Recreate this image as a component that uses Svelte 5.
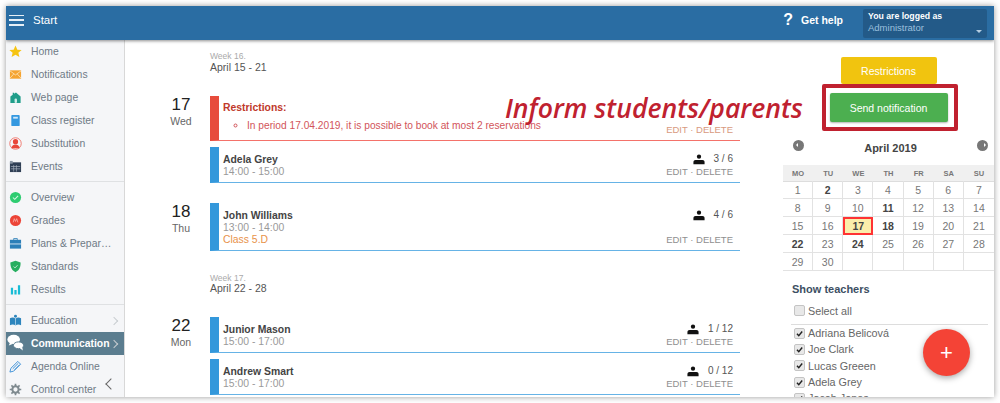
<script>
  const menuGroups = [
    [
      { icon: 'star', label: 'Home' },
      { icon: 'mail', label: 'Notifications' },
      { icon: 'house', label: 'Web page' },
      { icon: 'book', label: 'Class register' },
      { icon: 'sub', label: 'Substitution' },
      { icon: 'events', label: 'Events' }
    ],
    [
      { icon: 'check', label: 'Overview' },
      { icon: 'grades', label: 'Grades' },
      { icon: 'case', label: 'Plans & Prepar…' },
      { icon: 'shield', label: 'Standards' },
      { icon: 'bars', label: 'Results' }
    ],
    [
      { icon: 'open', label: 'Education', arrow: true },
      { icon: 'chat', label: 'Communication', arrow: true, active: true },
      { icon: 'pen', label: 'Agenda Online' },
      { icon: 'gear', label: 'Control center' }
    ]
  ]

  const weeks = [
    {
      title: 'Week 16.',
      range: 'April 15 - 21',
      days: [
        {
          num: 17,
          name: 'Wed',
          events: [
            { restriction: true },
            { teacher: 'Adela Grey', time: '14:00 - 15:00', count: '3 / 6' }
          ]
        },
        {
          num: 18,
          name: 'Thu',
          events: [
            { teacher: 'John Williams', time: '13:00 - 14:00', cls: 'Class 5.D', count: '4 / 6' }
          ]
        }
      ]
    },
    {
      title: 'Week 17.',
      range: 'April 22 - 28',
      days: [
        {
          num: 22,
          name: 'Mon',
          events: [
            { teacher: 'Junior Mason', time: '15:00 - 17:00', count: '1 / 12' },
            { teacher: 'Andrew Smart', time: '15:00 - 17:00', count: '0 / 12' }
          ]
        }
      ]
    }
  ]

  const dayNames = ['MO', 'TU', 'WE', 'TH', 'FR', 'SA', 'SU']
  const bold = [2, 11, 17, 18, 22, 24]
  const dates = [...Array(35)].map((_, i) => (i < 30 ? i + 1 : ''))
  const teachers = ['Adriana Belicová', 'Joe Clark', 'Lucas Greeen', 'Adela Grey', 'Jacob Jones']
</script>

{#snippet icon(name)}
  <svg class='ico' class:big={name === 'chat'} viewBox='0 0 14 14' aria-hidden='true'>
    {#if name === 'star'}
      <polygon points='7,0.5 9,5 13.6,5.4 10.1,8.4 11.2,13 7,10.6 2.8,13 3.9,8.4 0.4,5.4 5,5' fill='#f6c412' />
    {:else if name === 'mail'}
      <rect x='1' y='2.5' width='12' height='9' fill='#f5a432' />
      <path d='M1 3l6 4.5L13 3M1 11l4-4.5M13 11L9 6.5' fill='none' stroke='#fde3b8' stroke-width='.9' />
    {:else if name === 'house'}
      <path d='M1.5 13V6L4 4V2h1.5v1L7.5 1.5 12.5 6v7z' fill='#1f9d8a' />
      <rect x='6' y='8' width='2.6' height='5' rx='1.2' fill='#cdeee8' />
    {:else if name === 'book'}
      <rect x='2.5' y='1' width='9' height='12' rx='1' fill='#3498e0' />
      <rect x='4.5' y='3' width='5' height='2' fill='#cfe7f9' />
    {:else if name === 'sub'}
      <circle cx='7' cy='7' r='6.2' fill='none' stroke='#f0766c' stroke-width='1' />
      <circle cx='7' cy='5' r='2.8' fill='#e8463a' />
      <path d='M2.5 12c.5-3 2.5-4 4.5-4s4 1 4.500 4z' fill='#e8463a' />
    {:else if name === 'events'}
      <rect x='1' y='2.500' width='12' height='10.500' fill='#2f3f55' />
      <rect x='1' y='1' width='3' height='3' fill='#8995a3' />
      <path d='M2 7h10M2 9.500h10M5 5.500v7M8 5.500v7' stroke='#aab4bf' stroke-width='.7' />
    {:else if name === 'check'}
      <circle cx='7' cy='7' r='6' fill='#2ecc71' />
      <path d='M4.200 7l2 2 3.600-3.800' fill='none' stroke='#d9f7e5' stroke-width='1.100' />
    {:else if name === 'grades'}
      <circle cx='7' cy='7' r='6' fill='#ec4437' />
      <path d='M4.500 9l1.200-4 1.300 3 1.300-3 1.200 4' fill='none' stroke='#f9b7b1' stroke-width='.8' />
    {:else if name === 'case'}
      <path d='M5 3V1.800h4V3' fill='none' stroke='#2c7fb8' stroke-width='1' />
      <rect x='1' y='3' width='12' height='9.500' fill='#2c7fb8' />
      <rect x='1' y='7' width='12' height='1' fill='#d5e8f5' />
    {:else if name === 'shield'}
      <path d='M7 .8l5.500 2c0 5-1.200 8.300-5.500 10.400C2.700 11.100 1.500 7.800 1.500 2.800z' fill='#27ae60' />
      <path d='M5 7l1.500 1.500L9.200 5.600' fill='none' stroke='#d6f3e2' stroke-width='.9' />
    {:else if name === 'bars'}
      <path d='M2 5h2.400v7.500H2zM5.800 7.500h2.400v5H5.800zM9.600 2.500H12v10H9.600z' fill='#17bcd6' />
    {:else if name === 'open'}
      <path d='M1 4.500C3 3.500 5.500 3.500 7 5c1.500-1.500 4-1.500 6-.5V12c-2-1-4.500-1-6 .5C5.500 11 3 11 1 12z' fill='#2d85bd' />
      <circle cx='7' cy='2.500' r='1.600' fill='#2d85bd' />
      <path d='M7 5v7.500' stroke='#d5e8f5' stroke-width='.7' />
    {:else if name === 'chat'}
      <ellipse cx='5.500' cy='4.500' rx='5.200' ry='3.800' fill='#fff' />
      <path d='M2.500 7l-1 2.500L5 8z' fill='#fff' />
      <ellipse cx='9.500' cy='9.300' rx='4.200' ry='2.800' fill='#fff' stroke='#5b7d8f' stroke-width='.8' />
      <path d='M10.500 11.500l2.500 2-.5-3z' fill='#fff' />
    {:else if name === 'pen'}
      <path d='M1 13l1-4L9.500 1.500l3 3L5 12zM4 9.500L10 3.500M6 10.500L11.500 5' fill='none' stroke='#3b8fd6' stroke-width='1' />
    {:else if name === 'gear'}
      <circle cx='7' cy='7' r='3.400' fill='none' stroke='#7f8a8f' stroke-width='2.200' />
      <path d='M7 .8v2.400M7 10.800v2.400M.8 7h2.400M10.800 7h2.400M2.600 2.600l1.700 1.700M9.700 9.700l1.700 1.700M11.400 2.600L9.700 4.300M4.300 9.700l-1.700 1.700' stroke='#7f8a8f' stroke-width='1.800' />
    {/if}
  </svg>
{/snippet}

{#snippet person()}
  <svg class='person' viewBox='0 0 14 12' aria-hidden='true'>
    <circle cx='7' cy='2.700' r='2.500' fill='#111' />
    <path d='M3 6.500h8c1.500 0 2.500 1 2.500 2.500v2.500H.5V9C.5 7.500 1.500 6.500 3 6.500z' fill='#111' />
  </svg>
{/snippet}

<div class='frame'>
  <header class='topbar'>
    <button class='burger' aria-label='Menu'><i></i><i></i><i></i></button>
    <span class='page-title'>Start</span>
    <span class='help'><b class='qm'>?</b><b>Get help</b></span>
    <div class='user'>
      <div class='user-top'>You are logged as</div>
      <div class='user-role'>Administrator</div>
      <span class='caret'></span>
    </div>
  </header>

  <div class='body'>
    <nav class='side'>
      {#each menuGroups as group, g}
        <ul class='group' class:last={g === 2}>
          {#each group as item}
            <li class='item' class:active={item.active}>
              <span class='ico-box'>{@render icon(item.icon)}</span>
              <span class='label'>{item.label}</span>
              {#if item.arrow}<span class='chev'></span>{/if}
            </li>
          {/each}
        </ul>
      {/each}
      <span class='collapse'></span>
    </nav>

    <main class='main'>
      {#each weeks as week}
        <section class='week'>
          <div class='week-no'>{week.title}</div>
          <div class='week-range'>{week.range}</div>
          {#each week.days as day}
            <div class='day'>
              <div class='date'>
                <div class='num'>{day.num}</div>
                <div class='dname'>{day.name}</div>
              </div>
              <div class='events'>
                {#each day.events as ev}
                  {#if ev.restriction}
                    <div class='card red'>
                      <div class='info'>
                        <div class='r-title'>Restrictions:</div>
                        <ul class='r-list'>
                          <li>In period 17.04.2019, it is possible to book at most 2 reservations</li>
                        </ul>
                      </div>
                      <div class='actions end'>
                        <div class='links'>EDIT · DELETE</div>
                      </div>
                    </div>
                  {:else}
                    <div class='card'>
                      <div class='info'>
                        <div class='teacher'>{ev.teacher}</div>
                        <div class='time'>{ev.time}</div>
                        {#if ev.cls}<div class='cls'>{ev.cls}</div>{/if}
                      </div>
                      <div class='actions'>
                        <div class='count'>{@render person()}<span>{ev.count}</span></div>
                        <div class='links'>EDIT · DELETE</div>
                      </div>
                    </div>
                  {/if}
                {/each}
              </div>
            </div>
          {/each}
        </section>
      {/each}
    </main>

    <aside class='panel'>
      <div class='buttons'>
        <button class='btn yellow'>Restrictions</button>
        <button class='btn green'>Send notification</button>
      </div>

      <div class='cal-head'>
        <span class='round left'></span>
        <span class='month'>April 2019</span>
        <span class='round right'></span>
      </div>
      <div class='cal'>
        {#each dayNames as d}
          <div class='dow'>{d}</div>
        {/each}
        {#each dates as d}
          <div class='cell' class:strong={bold.includes(d)} class:today={d === 17}>{d}</div>
        {/each}
      </div>

      <div class='teachers'>
        <h4>Show teachers</h4>
        <div class='check all'><span class='box'></span>Select all</div>
        <div class='list'>
          {#each teachers as t}
            <div class='check'>
              <span class='box'>
                <svg viewBox='0 0 10 10' aria-hidden='true'><path d='M2.200 5.200l2 2.200 3.800-4.600' fill='none' stroke='#222' stroke-width='1.600' /></svg>
              </span>{t}
            </div>
          {/each}
        </div>
      </div>
    </aside>
  </div>

  <div class='note'>Inform students/parents</div>
  <div class='note-box'></div>
  <button class='fab' aria-label='Add'>+</button>
</div>

<style>
  :global(body) {
    margin: 0;
    background: #fff;
  }
  .frame {
    position: relative;
    margin: 6px;
    width: 988px;
    height: 391px;
    overflow: hidden;
    background: #fff;
    box-shadow: 0 0 6px rgba(0, 0, 0, .4);
    font-family: 'Liberation Sans', Arial, sans-serif;
    color: #444;
  }
  .topbar {
    display: flex;
    align-items: center;
    height: 34px;
    background: #2a6da3;
    color: #fff;
    box-shadow: 0 1px 3px rgba(0, 0, 0, .45);
    position: relative;
    z-index: 2;
  }
  .burger {
    display: flex;
    flex-direction: column;
    justify-content: space-between;
    width: 15px;
    height: 11px;
    margin: 0 0 6px 3px;
    padding: 0;
    border: 0;
    background: none;
  }
  .burger i {
    height: 1.500px;
    background: #e6eff6;
  }
  .page-title {
    margin: 0 0 6px 9px;
    font-size: 11.500px;
  }
  .help {
    display: flex;
    align-items: center;
    gap: 8px;
    margin: 0 20px 6px auto;
    font-size: 10.500px;
  }
  .qm {
    font-size: 16px;
  }
  .user {
    position: relative;
    width: 124px;
    height: 29px;
    margin-right: 7px;
    padding: 1px 5px;
    box-sizing: border-box;
    background: #235a88;
    border-radius: 2px;
  }
  .user-top {
    font-size: 8.700px;
    font-weight: 700;
    line-height: 12px;
  }
  .user-role {
    font-size: 9.500px;
    line-height: 12px;
    color: #9cc0de;
  }
  .caret {
    position: absolute;
    right: 5px;
    bottom: 5px;
    border: 3.500px solid transparent;
    border-top-color: #b5cde1;
    border-bottom: 0;
  }
  .body {
    display: flex;
    height: 357px;
  }
  .side {
    position: relative;
    flex: 0 0 119px;
    background: #f5f6f8;
    border-right: 1px solid #d8d8d8;
    box-sizing: border-box;
    font-size: 10.400px;
    color: #6f7a86;
  }
  .group {
    list-style: none;
    margin: 0 0 4px;
    padding: 0 0 3px;
    border-bottom: 1px solid #dfe1e3;
  }
  .group.last {
    border: 0;
  }
  .item {
    display: flex;
    align-items: center;
    height: 23px;
    white-space: nowrap;
  }
  .item.active {
    background: #5b7d8f;
    color: #fff;
    font-weight: 700;
  }
  .ico-box {
    flex: 0 0 25px;
    display: flex;
    justify-content: center;
    padding-right: 7px;
    box-sizing: border-box;
  }
  .ico {
    flex: none;
    width: 13px;
    height: 13px;
  }
  .ico.big {
    width: 17px;
    height: 17px;
    margin-top: -3px;
  }
  .chev {
    position: absolute;
    right: 7px;
    width: 5px;
    height: 5px;
    border: solid #c9cdd1;
    border-width: 1px 1px 0 0;
    transform: rotate(45deg);
  }
  .collapse {
    position: absolute;
    right: 9px;
    bottom: 9px;
    width: 7px;
    height: 7px;
    border: solid #666;
    border-width: 0 0 1.500px 1.500px;
    transform: rotate(45deg);
  }
  .main {
    flex: 1;
    padding: 10px 43px 0 36px;
    min-width: 0;
  }
  .week {
    margin-bottom: 21px;
  }
  .week-no {
    margin-left: 49px;
    font-size: 8.500px;
    line-height: 12px;
    color: #aaa;
  }
  .week-range {
    margin-left: 49px;
    margin-bottom: 24px;
    font-size: 10.500px;
    line-height: 10px;
    color: #555;
  }
  .week + .week .week-range {
    margin-top: -1px;
  }
  .day {
    display: flex;
    gap: 9px;
    margin-bottom: 20px;
  }
  .day:last-child {
    margin-bottom: 0;
  }
  .date {
    flex: 0 0 40px;
    margin-top: -1px;
    text-align: center;
  }
  .num {
    font-size: 17px;
    line-height: 20px;
    color: #222;
  }
  .dname {
    font-size: 10.500px;
    line-height: 12px;
    color: #666;
  }
  .events {
    flex: 1;
    display: flex;
    flex-direction: column;
    gap: 6px;
  }
  .card {
    display: flex;
    justify-content: space-between;
    min-height: 36px;
    box-sizing: border-box;
    padding: 6px 7px 4px 4px;
    border-left: 9px solid #3498db;
    border-bottom: 1px solid #66b3e6;
    font-size: 10.400px;
  }
  .card.red {
    border-left-color: #e74c3c;
    border-bottom-color: #f4726a;
    padding-top: 5px;
    height: 45px;
  }
  .info {
    padding-top: 1px;
  }
  .teacher {
    font-weight: 700;
    line-height: 12px;
    color: #444;
  }
  .time {
    line-height: 12px;
    color: #9a9a9a;
  }
  .cls {
    line-height: 12px;
    color: #e8924a;
  }
  .r-title {
    font-weight: 700;
    line-height: 12px;
    margin-bottom: 6px;
    color: #c0392b;
  }
  .r-list {
    margin: 0;
    padding: 0 0 0 24px;
    list-style: circle;
    color: #d2545a;
    line-height: 12px;
    font-size: 10.200px;
  }
  .actions {
    display: flex;
    flex-direction: column;
    justify-content: space-between;
    align-items: flex-end;
  }
  .actions.end {
    justify-content: flex-end;
  }
  .count {
    display: flex;
    align-items: center;
    gap: 9px;
    color: #555;
    font-size: 10px;
    line-height: 12px;
  }
  .person {
    width: 12px;
    height: 11px;
  }
  .links {
    color: #8f8f8f;
    font-size: 9.500px;
    line-height: 12px;
  }
  .red .links {
    color: #d89a80;
  }
  .panel {
    flex: 0 0 211px;
    font-size: 11px;
  }
  .buttons {
    display: flex;
    flex-direction: column;
    align-items: center;
    gap: 9px;
    padding: 17px 0 0 0;
    margin-left: 0;
    height: 95px;
    box-sizing: border-box;
  }
  .btn {
    border: 0;
    border-radius: 2px;
    color: #fff;
    font: 10.500px 'Liberation Sans', Arial, sans-serif;
  }
  .yellow {
    width: 96px;
    height: 27px;
    background: #f1c40f;
  }
  .green {
    width: 118px;
    height: 29px;
    background: #4caf50;
    box-shadow: 0 1px 2px rgba(0, 0, 0, .3);
  }
  .cal-head {
    display: flex;
    align-items: center;
    justify-content: space-between;
    height: 30px;
    padding: 0 6px 10px 10px;
    box-sizing: border-box;
  }
  .month {
    font-size: 11px;
    font-weight: 700;
    color: #444;
    padding-top: 5px;
  }
  .round {
    position: relative;
    width: 11px;
    height: 11px;
    border-radius: 50%;
    background: #777;
  }
  .round::after {
    content: '';
    position: absolute;
    top: 3px;
    border: 2.500px solid transparent;
  }
  .left::after {
    left: 0.500px;
    border-right-color: #fff;
  }
  .right::after {
    right: 0.500px;
    border-left-color: #fff;
  }
  .cal {
    display: grid;
    grid-template-columns: repeat(7, 1fr);
    grid-auto-rows: 18px;
    font-size: 10.500px;
    color: #777;
  }
  .dow {
    display: flex;
    align-items: center;
    justify-content: center;
    height: 16px;
    background: #f0f0f0;
    border-bottom: 1px solid #ddd;
    font-size: 7.500px;
    font-weight: 700;
    color: #777;
  }
  .cell {
    display: flex;
    align-items: center;
    justify-content: center;
    box-sizing: border-box;
    border-right: 1px solid #e2e2e2;
    border-bottom: 1px solid #e2e2e2;
    margin-top: -2px;
    height: 18px;
  }
  .cell:nth-child(7n) {
    border-right: 0;
  }
  .cell.strong {
    font-weight: 700;
    color: #444;
  }
  .cell.today {
    background: #fbeeab;
    border: 1px solid #f33;
    outline: 1px solid #f33;
    outline-offset: -2px;
  }
  .teachers {
    margin: 9px 6px 0 9px;
    font-size: 10.800px;
    color: #666;
  }
  .teachers h4 {
    margin: 0 0 7px;
    font-size: 11px;
    line-height: 14px;
    color: #3d4f63;
  }
  .check {
    display: flex;
    align-items: center;
    gap: 3px;
    height: 16.300px;
    padding-left: 2px;
    white-space: nowrap;
  }
  .all {
    height: 22px;
    padding-bottom: 6px;
    margin-left: -1px;
    padding-left: 3px;
    box-sizing: border-box;
    border-bottom: 1px solid #ddd;
  }
  .box {
    flex: 0 0 9px;
    width: 9px;
    height: 9px;
    border: 1px solid #c4c4c4;
    border-radius: 2px;
    background: #e8e8e8;
    box-sizing: content-box;
    display: flex;
  }
  .box svg {
    width: 9px;
    height: 9px;
  }
  .note {
    position: absolute;
    left: 499px;
    top: 82px;
    font-family: 'Open Sans', sans-serif;
    font-style: italic;
    font-weight: 600;
    font-size: 26.600px;
    line-height: 40px;
    color: #c0212f;
    white-space: nowrap;
    z-index: 3;
  }
  .note-box {
    position: absolute;
    left: 816px;
    top: 78px;
    width: 136px;
    height: 47px;
    box-sizing: border-box;
    border: 4px solid #c0212f;
    border-radius: 2px;
    z-index: 3;
  }
  .fab {
    position: absolute;
    left: 917px;
    top: 323px;
    width: 47px;
    height: 47px;
    padding: 0;
    border: 0;
    border-radius: 50%;
    background: #f44336;
    color: #fff;
    font: 22px 'Liberation Sans', Arial, sans-serif;
    box-shadow: 0 2px 6px rgba(0, 0, 0, .35);
    z-index: 4;
  }
</style>
